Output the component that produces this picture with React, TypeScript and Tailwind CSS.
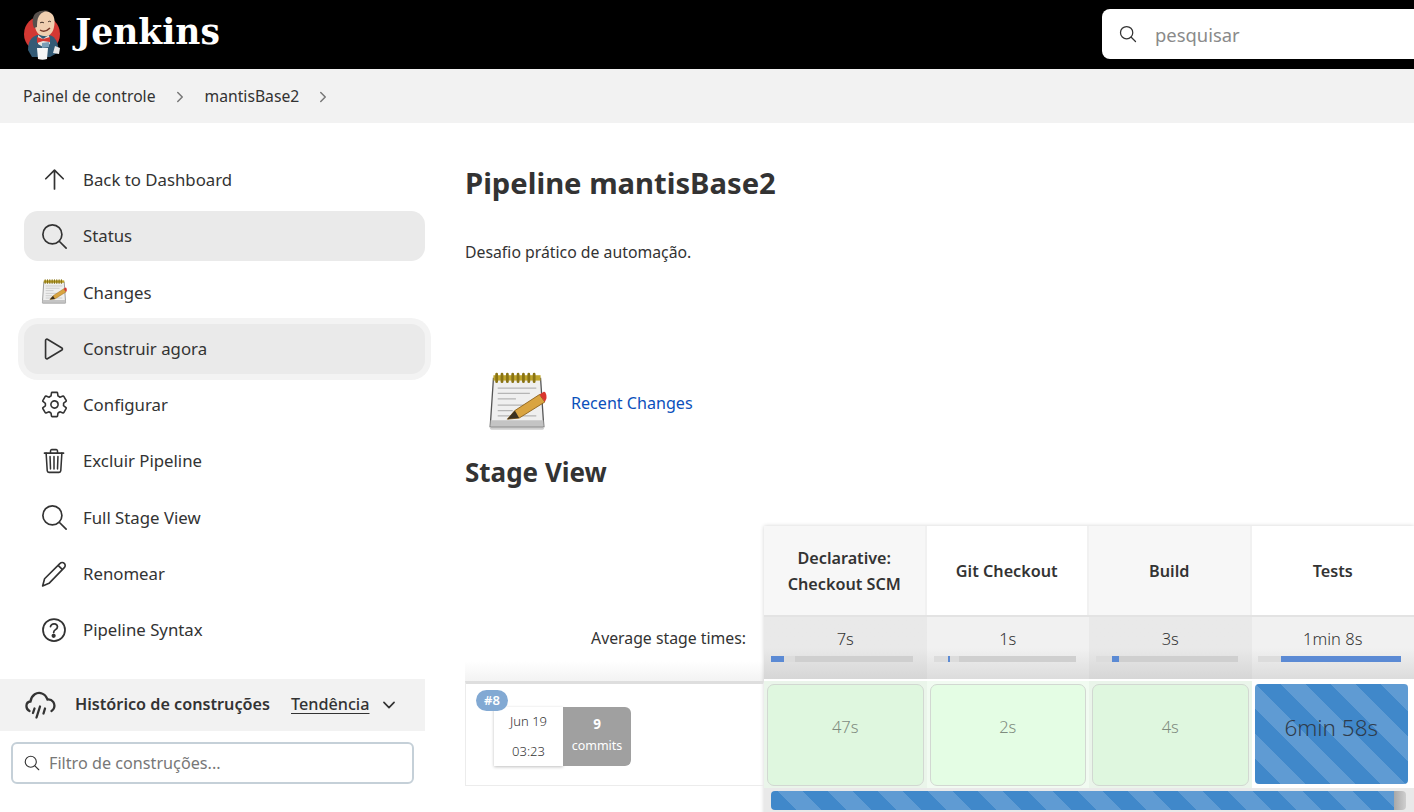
import {
  IoArrowUpOutline,
  IoChevronDownOutline,
  IoChevronForwardOutline,
  IoHelpCircleOutline,
  IoPlayOutline,
  IoSearchOutline,
  IoSettingsOutline,
  IoTrashOutline,
} from 'react-icons/io5';

function JenkinsLogo() {
  return (
    <svg width="40" height="50" viewBox="0 0 40 50" className="shrink-0">
      <circle cx="20" cy="24" r="18" fill="#d33833" />
      {/* jacket */}
      <path d="M6 40c0-8 3-13 9-15l12 0c5 1 8 5 9 11l1 6-9 5-18 0z" fill="#335a75" />
      <path d="M16 25l5 4 6-4 1 9-7 3-5-3z" fill="#e8e4de" />
      <path d="M15 27l6 2 7-2 0 5-7-1-6 2z" fill="#d33833" />
      <path d="M20 33l7-1 0 5-7 1z" fill="#7a9fb8" />
      {/* head */}
      <path d="M14 4c4-4 12-4 16 0 3 3 3 9 2 13-1 6-5 10-10 9-5 0-8-4-9-9-1-5-2-10 1-13z" fill="#f0cfb0" />
      <path d="M14 3c4-3 10-3 13-2-5 0-8 2-10 5-2 3-2 8-2 11l-3 1c-2-5-2-12 2-15z" fill="#57504c" />
      <path d="M18 13c1-1 3-1 4 0M26 12c1-1 2-1 3 0" stroke="#3a2a22" strokeWidth="1" fill="none" />
      <path d="M18 20c3 2 7 1 10-2" stroke="#7a3a2a" strokeWidth="1.5" fill="none" />
      {/* mug and note */}
      <path d="M15 38h11l-1 11c-3 1-6 1-9 0z" fill="#f6f6f6" />
      <path d="M33 36l5 2-1 6-6-1z" fill="#e8e8e8" />
    </svg>
  );
}

function NotepadIcon({ size }: { size: number }) {
  return (
    <svg width={size} height={size} viewBox="0 0 56 56" className="shrink-0">
      <rect x="3" y="51" width="50" height="3" rx="1.5" fill="#cfcfcf" />
      <path d="M6 6h44l3 45H3z" fill="#efefef" stroke="#555" strokeWidth="1.2" />
      <path d="M3.4 45h49.2l.4 6H3z" fill="#c4c4c4" />
      <rect x="6" y="3" width="44" height="5" fill="#bfa52c" />
      <path d="M9 2v7M14 2v7M19 2v7M24 2v7M29 2v7M34 2v7M39 2v7M44 2v7" stroke="#8a7414" strokeWidth="2.6" strokeLinecap="round" />
      <path d="M10 15h36M10 20h30M10 25h17M10 31h28M10 36h14M10 41h36" stroke="#b5b5b5" strokeWidth="1.2" />
      <path d="M19 44l7-8 23-15 5 7-24 15z" fill="#d9a441" stroke="#8a5e16" strokeWidth="0.8" />
      <path d="M19 44l7-8 4 7z" fill="#3a3020" />
      <path d="M49 21l4-2.500c1.500-.6 3 3 2.400 6.500l-1.400 3z" fill="#d9362e" />
    </svg>
  );
}

function PencilIcon() {
  return (
    <svg width="26" height="26" viewBox="0 0 24 24" fill="none" stroke="currentColor" strokeWidth="1.500" strokeLinejoin="round" className="shrink-0">
      <path d="M1.500 23l1.800-6.600L17.600 2.200a2.700 2.700 0 0 1 3.900 0 2.700 2.700 0 0 1 0 3.900L7.400 20.600z" />
      <path d="M15.800 4l4 4" />
    </svg>
  );
}

function WeatherIcon() {
  return (
    <svg width="32" height="30" viewBox="0 0 32 30" fill="none" stroke="currentColor" strokeWidth="2.300" strokeLinecap="round" className="shrink-0">
      <path d="M5.500 21C1.500 19 1 12 6.500 11.500 7.500 5 13 1.500 18 3.500c3 1 4.500 3.500 5.500 6 5-.5 8 4 6.500 8.500-.4 1.300-1.300 2.300-2.500 3" />
      <path d="M10.500 18.500l-1.500 4.500M16 16.500l-3.500 11M21 18.500l-1.500 5" />
    </svg>
  );
}

// ionicons come out too heavy at this size, thin them down
const thin = 'shrink-0 [&_*]:[stroke-width:28px]!';

const navItems = [
  { label: 'Back to Dashboard', icon: <IoArrowUpOutline size={31} className={thin} /> },
  { label: 'Status', icon: <IoSearchOutline size={31} className={thin} />, active: true },
  { label: 'Changes', icon: <NotepadIcon size={26} /> },
  { label: 'Construir agora', icon: <IoPlayOutline size={30} className={thin} />, focused: true },
  { label: 'Configurar', icon: <IoSettingsOutline size={29} className={thin} /> },
  { label: 'Excluir Pipeline', icon: <IoTrashOutline size={28} className={thin} /> },
  { label: 'Full Stage View', icon: <IoSearchOutline size={31} className={thin} /> },
  { label: 'Renomear', icon: <PencilIcon /> },
  { label: 'Pipeline Syntax', icon: <IoHelpCircleOutline size={32} className={thin} /> },
];

const stages = [
  {
    name: ['Declarative:', 'Checkout SCM'],
    avg: '7s',
    time: '47s',
    headBg: 'bg-[#f7f7f7]',
    avgBg: 'from-[#e9e9e9] via-[#e9e9e9] to-[#d6d6d6]',
    cellBg: 'bg-[#dff7df]',
    frameBg: 'bg-[#eaf5ea]',
    skip: 'w-0',
    blue: 'w-[13px]',
    rest: 'w-[11px]',
  },
  {
    name: ['Git Checkout'],
    avg: '1s',
    time: '2s',
    headBg: 'bg-white',
    avgBg: 'from-[#f1f1f1] via-[#f1f1f1] to-[#dcdcdc]',
    cellBg: 'bg-[#e4fde4]',
    frameBg: 'bg-[#f1fbf1]',
    skip: 'w-[14px]',
    blue: 'w-[2px]',
    rest: 'w-[9px]',
  },
  {
    name: ['Build'],
    avg: '3s',
    time: '4s',
    headBg: 'bg-[#f7f7f7]',
    avgBg: 'from-[#e9e9e9] via-[#e9e9e9] to-[#d6d6d6]',
    cellBg: 'bg-[#dff7df]',
    frameBg: 'bg-[#eaf5ea]',
    skip: 'w-[16px]',
    blue: 'w-[7px]',
    rest: 'w-0',
  },
];

const stripes =
  'bg-[repeating-linear-gradient(45deg,#4088ca_0px,#4088ca_17.7px,#5f9bd3_17.7px,#5f9bd3_35.4px)]';

function AvgBar({ skip, blue, rest }: { skip: string; blue: string; rest: string }) {
  return (
    <div className="ml-[7px] mt-[5px] flex h-[6px] w-[142px] bg-[#cfcfcf]">
      <div className={`h-full bg-[#dcdcdc] ${skip}`} />
      <div className={`h-full bg-[#5b8ad4] ${blue}`} />
      <div className={`h-full bg-[#dcdcdc] ${rest}`} />
    </div>
  );
}

export default function App() {
  return (
    <div className="h-[812px] w-[1414px] overflow-hidden bg-white font-['Noto_Sans',sans-serif] text-[15.8px] text-[#333]">
      {/* Header */}
      <header className="flex h-[69px] items-center justify-between bg-black">
        <div className="flex items-center pl-[22px]">
          <JenkinsLogo />
          <span className="ml-[13px] pb-[3px] font-['DejaVu_Serif',serif] text-[34.5px] font-bold text-white">Jenkins</span>
        </div>
        <div className="mb-[1px] flex h-[50px] w-[312px] items-center rounded-l-[8px] bg-white pl-[16px]">
          <IoSearchOutline size={20} className="text-[#333]" />
          <span className="ml-[17px] pt-[2px] text-[18.4px] text-[#8a8a8a]">pesquisar</span>
        </div>
      </header>

      {/* Breadcrumbs */}
      <nav className="flex h-[54px] items-center bg-[#f2f2f2] pl-[23px] pt-[1px] text-[15.7px]">
        <span>Painel de controle</span>
        <IoChevronForwardOutline size={16} className="ml-[16px] text-[#777]" />
        <span className="ml-[17px]">mantisBase2</span>
        <IoChevronForwardOutline size={16} className="ml-[16px] text-[#777]" />
      </nav>

      <div className="flex">
        {/* Sidebar */}
        <aside className="w-[425px] shrink-0 pt-[31.75px]">
          <div className="flex flex-col gap-[6.25px] pl-[24px] text-[16.8px]">
            {navItems.map((item) => (
              <div
                key={item.label}
                className={`flex h-[50px] items-center rounded-[14px] pl-[17px] ${
                  item.active ? 'bg-[#eaeaea]' : ''
                } ${item.focused ? 'bg-[#eaeaea] ring-[6px] ring-[#f3f3f3]' : ''}`}
              >
                <span className="flex w-[26px] justify-center text-[#333]">{item.icon}</span>
                <span className="ml-[16px]">{item.label}</span>
              </div>
            ))}
          </div>

          <div className="mt-[24.25px] flex h-[52px] items-center bg-[#f2f2f2] pl-[24px] text-[16.2px]">
            <WeatherIcon />
            <span className="ml-[19px] pb-[2px] font-semibold">Histórico de construções</span>
            <span className="ml-[21px] pb-[2px] font-medium underline underline-offset-[3px]">Tendência</span>
            <IoChevronDownOutline size={18} className="ml-[11px]" />
          </div>

          <div className="ml-[11px] mt-[11px] flex h-[42px] w-[403px] items-center rounded-[6px] border-2 border-[#c5d0d8] pl-[10px] text-[16.2px]">
            <IoSearchOutline size={18} className="text-[#333]" />
            <span className="ml-[8px] text-[#777]">Filtro de construções...</span>
          </div>
        </aside>

        {/* Main content */}
        <main className="min-w-0 flex-1 pl-[40px]">
          <h1 className="mt-[37px] h-[46px] text-[29.2px] font-bold leading-[46px]">Pipeline mantisBase2</h1>
          <p className="mt-[34px] leading-[24px]">Desafio prático de automação.</p>

          <div className="mt-[108px] flex items-center pl-[22px]">
            <NotepadIcon size={60} />
            <span className="ml-[24px] pt-[2px] text-[16.1px] text-[#0b50bb]">Recent Changes</span>
          </div>

          <h2 className="mt-[20px] h-[40px] text-[26px] font-bold leading-[40px]">Stage View</h2>

          {/* Stage table */}
          <div className="mt-[34px] flex w-[949px]">
            <div className="w-[299px] shrink-0">
              <div className="h-[91px]" />
              <div className="flex h-[44px] items-center justify-end pr-[18px]">Average stage times:</div>
              <div className="h-[20px] bg-gradient-to-b from-white to-[#f3f3f3]" />
              <div className="relative h-[105px] border-x border-t-[3px] border-b border-[#ececec] border-t-[#dedede] border-r-transparent pl-[28px] pt-[23px]">
                <span className="absolute left-[10px] top-[6px] rounded-full bg-[#82a9d3] px-[8px] text-[13px] font-semibold leading-[21px] text-white">
                  #8
                </span>
                <div className="flex h-[59px] w-[137px]">
                  <div className="flex w-[69px] flex-col items-center justify-around bg-white text-[13px] font-light shadow-[0_1px_3px_rgba(0,0,0,0.25)]">
                    <span>Jun 19</span>
                    <span>03:23</span>
                  </div>
                  <div className="flex w-[68px] flex-col items-center justify-center rounded-r-[6px] bg-[#a0a0a0] pb-[4px] text-[12.5px] text-white">
                    <span className="text-[13.5px] font-bold leading-[21px]">9</span>
                    <span className="leading-[21px]">commits</span>
                  </div>
                </div>
              </div>
            </div>

            <div className="w-[650px] shrink-0 shadow-[0_0_4px_rgba(0,0,0,0.18)]">
              <div className="grid grid-cols-4">
                {stages.map((stage) => (
                  <div key={stage.avg} className="flex flex-col">
                    <div className={`flex h-[89px] flex-col items-center justify-center border-r-2 border-[#f1f1f1] pt-[1px] text-[16.2px] font-semibold leading-[26px] ${stage.headBg}`}>
                      {stage.name.map((line) => (
                        <span key={line}>{line}</span>
                      ))}
                    </div>
                    <div className={`h-[66px] border-t-2 border-b-2 border-t-[#e3e3e3] border-b-white bg-gradient-to-b pt-[10px] text-center text-[16.5px] font-light leading-[24px] ${stage.avgBg}`}>
                      {stage.avg}
                      <AvgBar skip={stage.skip} blue={stage.blue} rest={stage.rest} />
                    </div>
                    <div className={`h-[107px] px-[3px] pt-[3px] ${stage.frameBg}`}>
                      <div className={`flex h-[102px] items-center justify-center rounded-[7px] border border-[#d2d8d2] pb-[16px] text-[16.5px] font-light text-[#7f8c7f] ${stage.cellBg}`}>
                        {stage.time}
                      </div>
                    </div>
                  </div>
                ))}
                <div className="flex flex-col">
                  <div className="flex h-[89px] items-center justify-center bg-white pt-[2px] text-[16.2px] font-semibold">Tests</div>
                  <div className="h-[66px] border-t-2 border-b-2 border-t-[#e3e3e3] border-b-white bg-gradient-to-b from-[#f1f1f1] via-[#f1f1f1] to-[#dcdcdc] pt-[10px] text-center text-[16.5px] font-light leading-[24px]">
                    1min 8s
                    <div className="ml-[6px] mt-[5px] flex h-[6px] w-[143px] bg-[#cfcfcf]">
                      <div className="h-full w-[23px] bg-[#dcdcdc]" />
                      <div className="h-full flex-1 bg-[#5b8ad4]" />
                    </div>
                  </div>
                  <div className="h-[107px] bg-white pl-[3px] pr-[6px] pt-[3px]">
                    <div className={`flex h-[100px] items-center justify-center rounded-[4px] pb-[12px] text-[22.5px] font-light text-[#2f3c4c] ${stripes}`}>
                      6min 58s
                    </div>
                  </div>
                </div>
              </div>
              <div className="flex h-[30px] bg-[#e9e9e9] pl-[7px] pr-[8px] pt-[3px]">
                <div className={`h-[19px] flex-1 rounded-l-[4px] ${stripes}`} />
                <div className="h-[19px] w-[12px] rounded-r-[4px] bg-gradient-to-r from-[#a8a8a8] to-[#cfcfcf]" />
              </div>
            </div>
          </div>
        </main>
      </div>
    </div>
  );
}
